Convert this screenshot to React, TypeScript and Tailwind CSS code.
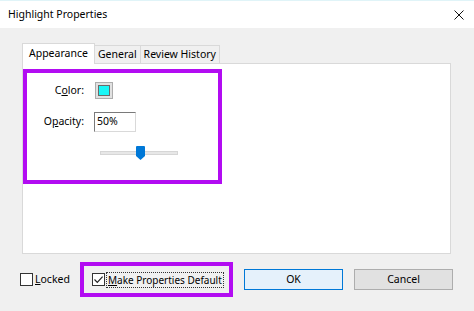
import React from "react";

const font = { fontFamily: '"Noto Sans", "Open Sans", sans-serif' };

function Checkbox({ checked }: { checked?: boolean }) {
  return (
    <span className="w-[13px] h-[13px] border border-[#333] bg-white flex items-center justify-center shrink-0">
      {checked && (
        <svg width="11" height="11" viewBox="0 0 11 11">
          <path d="M1.5 5.5 L4.3 8.3 L9.6 2.6" fill="none" stroke="#222" strokeWidth="1.2" />
        </svg>
      )}
    </span>
  );
}

function Tab({ label, active }: { label: string; active?: boolean }) {
  if (active)
    return (
      <div className="h-[21px] px-[6px] bg-white border border-b-0 border-[#d9d9d9] flex items-center text-[10.5px] text-black relative z-10 -mb-px">
        {label}
      </div>
    );
  return (
    <div className="h-[18px] px-[3px] bg-[#f0f0f0] border border-b-0 border-l-0 border-[#d9d9d9] flex items-center text-[10.5px] text-black">
      {label}
    </div>
  );
}

export default function App() {
  return (
    <div className="w-[474px] h-[311px] bg-[#f0f0f0] flex flex-col overflow-hidden text-black" style={font}>
      <div className="h-[28px] bg-white flex items-center justify-between pl-2 pr-[10px] border-t border-[#e0f4f8]">
        <span className="text-[10.5px]">Highlight Properties</span>
        <svg width="10" height="10" viewBox="0 0 10 10">
          <path d="M0.5 0.5 L9.5 9.5 M9.5 0.5 L0.5 9.5" stroke="#111" strokeWidth="1" />
        </svg>
      </div>

      <div className="pl-[22px] pr-[23px] pt-[15px]">
        <div className="flex items-end">
          <Tab label="Appearance" active />
          <Tab label="General" />
          <Tab label="Review History" />
        </div>
        <div className="h-[191px] bg-white border border-[#d9d9d9] pt-[5px] pl-0">
          <div className="w-[199px] h-[115px] border-[4px] border-[#b20cf2] pt-[9px] flex flex-col text-[10.5px]">
            <div className="flex items-center h-[17px]">
              <span className="w-[57px] text-right">
                C<span className="underline">o</span>lor:
              </span>
              <span className="ml-[11px] w-[18px] h-[17px] bg-[#e1e1e1] border border-[#adadad] flex items-center justify-center">
                <span className="w-[12px] h-[11px] bg-[#19f6f6] border border-[#6a6a6a]" />
              </span>
            </div>
            <div className="flex items-center h-[20px] mt-[13px]">
              <span className="w-[57px] text-right">
                O<span className="underline">p</span>acity:
              </span>
              <span className="ml-[10px] w-[42px] h-[20px] bg-white border border-[#7a7a7a] border-r-[#d9d9d9] border-b-[#d9d9d9] pl-[2px] flex items-center">
                50%
              </span>
            </div>
            <div className="flex items-center ml-[73px] mt-[14px] h-[13px] relative w-[78px]">
              <div className="w-full h-[4px] bg-[#e7e7e7] border border-[#d6d6d6]" />
              <svg className="absolute left-[36px] top-0" width="9" height="14" viewBox="0 0 9 14">
                <path d="M0 1 Q0 0 1 0 H8 Q9 0 9 1 V10 L4.5 14 L0 10 Z" fill="#0078d7" />
              </svg>
            </div>
          </div>
        </div>
      </div>

      <div className="flex items-center pl-[20px] mt-[8px]">
        <label className="w-[60px] flex items-center gap-[2px] text-[10.5px]">
          <Checkbox />
          <span>
            <span className="underline">L</span>ocked
          </span>
        </label>
        <div className="w-[153px] h-[35px] border-[4px] border-[#b20cf2] flex items-center pl-[8px] gap-[1px] text-[10px] whitespace-nowrap">
          <Checkbox checked />
          <span className="border border-dotted border-[#333] px-[1px] leading-[14px]">
            <span className="underline">M</span>ake Properties Default
          </span>
        </div>
        <button className="ml-[11px] w-[99px] h-[21px] bg-[#e5f1fb] border border-[#0078d7] text-[10.5px]">OK</button>
        <button className="ml-[11px] w-[99px] h-[21px] bg-[#e1e1e1] border border-[#adadad] text-[10.5px]">Cancel</button>
      </div>
    </div>
  );
}
